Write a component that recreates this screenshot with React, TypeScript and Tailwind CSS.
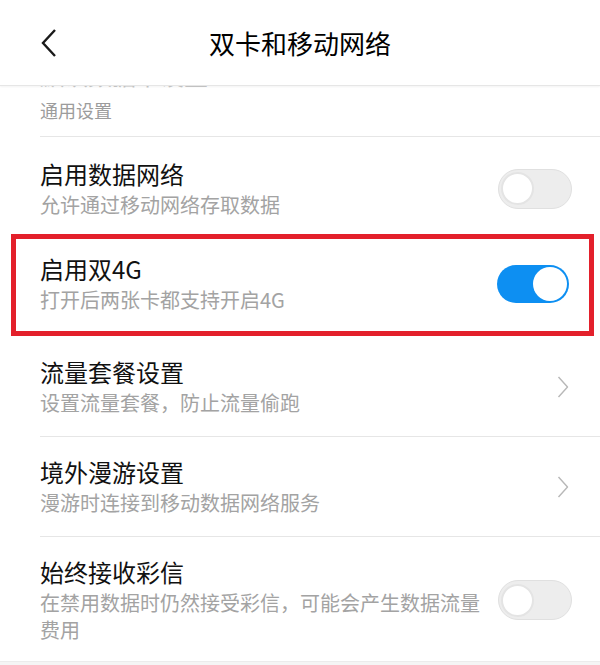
import React from 'react'

const FONT = { fontFamily: '"Noto Sans CJK SC", "Noto Sans", sans-serif' }

function Toggle({ on }: { on?: boolean }) {
  if (on) {
    return (
      <div className="w-[72px] h-[38px] rounded-full bg-[#0d8ff2] flex items-center justify-end pr-[2px] shrink-0">
        <div className="w-[34px] h-[34px] rounded-full bg-white" />
      </div>
    )
  }
  return (
    <div className="w-[74px] h-[40px] rounded-full bg-[#ededed] border border-[#e0e0e0] flex items-center pl-[2px] shrink-0">
      <div className="w-[33px] h-[33px] rounded-full bg-white border-2 border-[#e4e4e4]" />
    </div>
  )
}

function Chevron() {
  return (
    <div className="w-[72px] flex justify-end pr-[1px] shrink-0">
      <svg width="12" height="24" viewBox="0 0 12 24" fill="none">
        <path d="M1.5 2 L10.5 12 L1.5 22" stroke="#b8b8b8" strokeWidth="1.4" strokeLinejoin="round" />
      </svg>
    </div>
  )
}

interface RowProps {
  title: string
  sub: string
  right: React.ReactNode
  pt?: string
  pb?: string
}

function Row({ title, sub, right, pt = 'pt-[20px]', pb = 'pb-[20px]' }: RowProps) {
  return (
    <div className={`flex items-center ${pt} ${pb}`}>
      <div className="flex-1 min-w-0 pr-[10px]">
        <div className="text-[24px] leading-[30px] text-[#111]">{title}</div>
        <div className="text-[20px] leading-[27px] mt-[2px] text-[#a3a3a3]">{sub}</div>
      </div>
      {right}
    </div>
  )
}

export default function App() {
  return (
    <div className="w-[600px] h-[665px] bg-white overflow-hidden flex flex-col" style={FONT}>
      {/* header */}
      <div className="h-[86px] shrink-0 flex items-center relative border-b border-[#e6e6e6] shadow-[0_1px_2px_rgba(0,0,0,0.05)] z-10 bg-white">
        <div className="pl-[41px] w-[100px]">
          <svg width="16" height="30" viewBox="0 0 16 30" fill="none">
            <path d="M14 2 L2 15 L14 28" stroke="#1a1a1a" strokeWidth="2.4" strokeLinejoin="miter" />
          </svg>
        </div>
        <div className="flex-1 text-center text-[26px] text-black pr-[100px]">双卡和移动网络</div>
      </div>

      {/* previous item, mostly scrolled under the header */}
      <div className="h-[4px] overflow-hidden pl-[40px] shrink-0">
        <div className="text-[24px] leading-[30px] -mt-[26px] text-[#c8c8c8]">默认数据卡设置</div>
      </div>

      {/* section label */}
      <div className="ml-[40px] border-b border-[#e6e6e6] pt-[8px] pb-[14px] shrink-0">
        <div className="text-[18px] leading-[24px] text-[#9c9c9c]">通用设置</div>
      </div>

      <div className="ml-[40px] pr-[28px]">
        <Row title="启用数据网络" sub="允许通过移动网络存取数据" right={<Toggle />} pt="pt-[22px]" pb="pb-[16px]" />
      </div>

      <div className="ml-[11px] mr-[6px] border-[5px] border-[#e3202b] pl-[24px] pr-[20px]">
        <Row title="启用双4G" sub="打开后两张卡都支持开启4G" right={<Toggle on />} pt="pt-[15px]" pb="pb-[18px]" />
      </div>

      <div className="ml-[40px] pr-[30px] border-b border-[#e6e6e6]">
        <Row title="流量套餐设置" sub="设置流量套餐，防止流量偷跑" right={<Chevron />} pt="pt-[21px]" />
      </div>

      <div className="ml-[40px] pr-[30px] border-b border-[#e6e6e6]">
        <Row title="境外漫游设置" sub="漫游时连接到移动数据网络服务" right={<Chevron />} />
      </div>

      <div className="ml-[40px] pr-[28px]">
        <Row
          title="始终接收彩信"
          sub="在禁用数据时仍然接受彩信，可能会产生数据流量费用"
          right={<Toggle />}
          pb="pb-[18px]"
        />
      </div>

      <div className="flex-1 bg-[#f5f5f5] border-t border-[#ececec]" />
    </div>
  )
}
